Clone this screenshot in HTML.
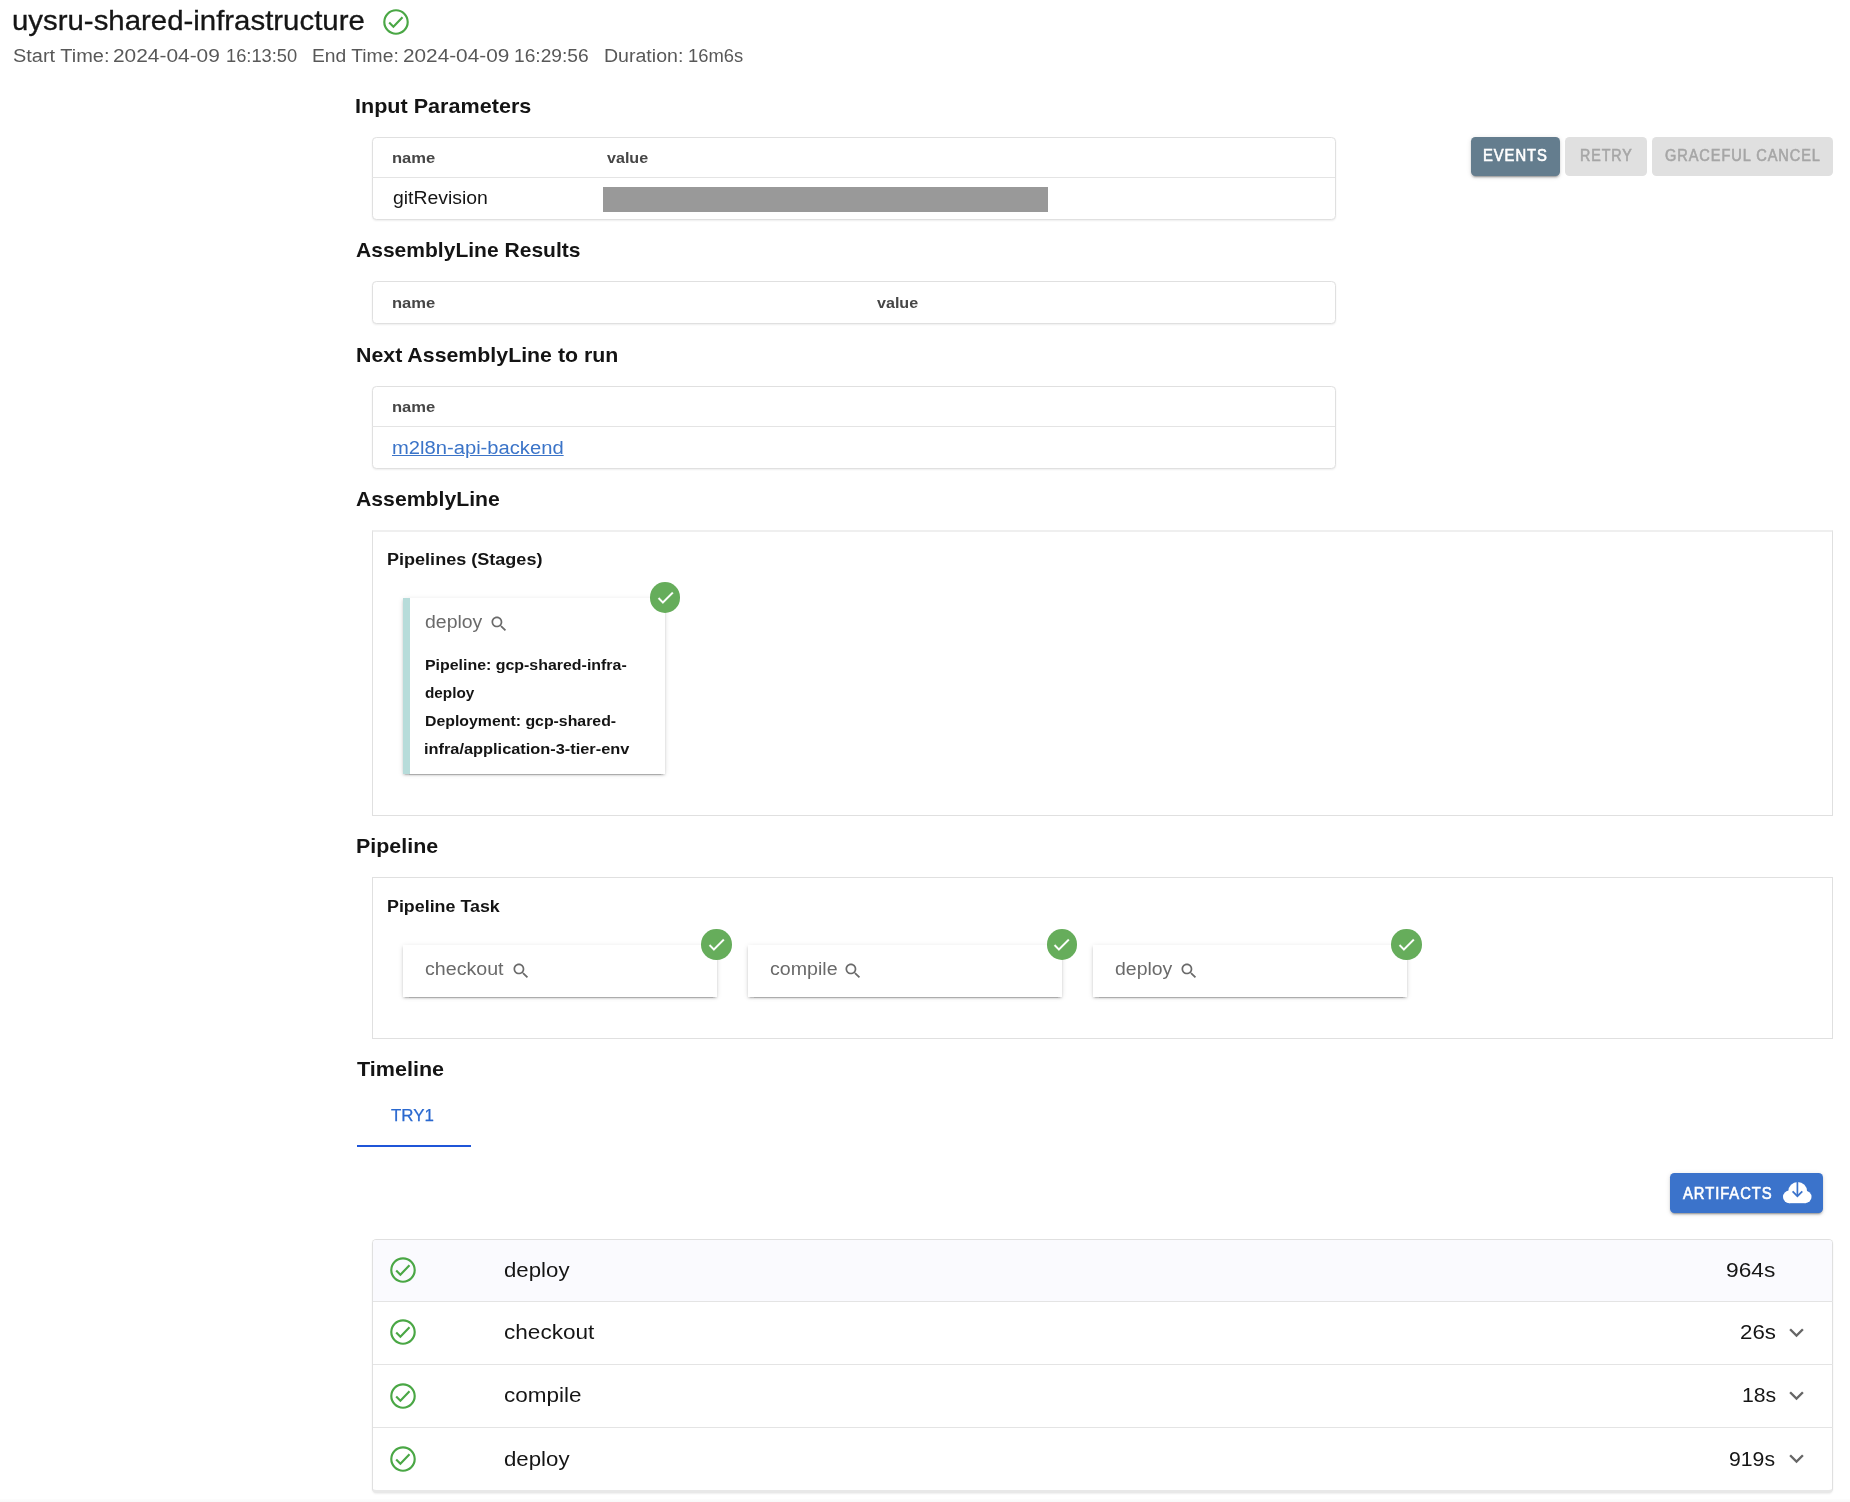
<!DOCTYPE html>
<html lang="en">
<head>
<meta charset="utf-8">
<title>uysru-shared-infrastructure</title>
<style>
html,body{margin:0;padding:0;background:#fff;}
body{will-change:transform;width:1850px;height:1502px;position:relative;overflow:hidden;font-family:"Liberation Sans",sans-serif;}
.t{position:absolute;white-space:nowrap;line-height:1;transform-origin:0 0;}
.abs{position:absolute;box-sizing:border-box;}
.paper{position:absolute;box-sizing:border-box;background:#fff;border-radius:4.4px;border:1px solid #e0e0e0;box-shadow:0 1px 2px rgba(0,0,0,.07);}
.hr{position:absolute;height:1px;background:#e4e4e4;}
.outl{position:absolute;box-sizing:border-box;border:1px solid #e0e0e0;}
.card{position:absolute;box-sizing:border-box;background:#fff;box-shadow:0 3.3px 1.1px -2.2px rgba(0,0,0,.2),0 2.2px 2.2px 0 rgba(0,0,0,.14),0 1.1px 5.5px 0 rgba(0,0,0,.12);}
.btn{position:absolute;box-sizing:border-box;border-radius:4.4px;}
.sh2{box-shadow:0 3px 1px -2px rgba(0,0,0,.2),0 2px 2px 0 rgba(0,0,0,.14),0 1px 5px 0 rgba(0,0,0,.12);}
.badge{position:absolute;width:30.4px;height:30.4px;border-radius:50%;background:#66ad5b;}
svg{position:absolute;display:block;overflow:visible;}
</style>
</head>
<body>
<!-- header icon -->
<svg style="left:380.60px;top:6.65px" width="30" height="30" viewBox="0 0 30 30"><circle cx="15" cy="15" r="11.7" fill="none" stroke="#4aa745" stroke-width="2.15"/><path d="M8.2 15.5 12.4 19.7 21.5 10.2" fill="none" stroke="#4aa745" stroke-width="2.15"/></svg>

<!-- tables -->
<div class="paper" style="left:372px;top:137px;width:963.5px;height:83px"></div>
<div class="hr" style="left:372.3px;top:177px;width:962.7px"></div>
<div class="abs" style="left:603px;top:187px;width:445px;height:25px;background:#999"></div>
<div class="paper" style="left:372px;top:281px;width:963.5px;height:43px"></div>
<div class="paper" style="left:372px;top:386px;width:963.5px;height:83px"></div>
<div class="hr" style="left:372.3px;top:426.2px;width:962.7px"></div>

<!-- buttons -->
<div class="btn sh2" style="left:1471px;top:136.9px;width:88.6px;height:38.9px;background:#647d8e"></div>
<div class="btn" style="left:1565px;top:136.9px;width:81.8px;height:38.9px;background:#e0e0e0"></div>
<div class="btn" style="left:1652.2px;top:136.9px;width:180.5px;height:38.9px;background:#e0e0e0"></div>

<!-- AssemblyLine box -->
<div class="outl" style="left:372px;top:530px;width:1461px;height:286px;border-top:2px solid #efefef"></div>
<div class="card" style="left:403px;top:598px;width:262.3px;height:176px;border-left:7px solid #b7dcda"></div>
<div class="badge" style="left:649.8px;top:582.3px"></div>
<svg style="left:655.14px;top:587.04px" width="21" height="21" viewBox="0 0 24 24"><path fill="#fff" stroke="#fff" stroke-width="0.3" d="M9 16.17 4.83 12l-1.42 1.41L9 19 21 7l-1.41-1.41z"/></svg>
<svg style="left:488.7px;top:614.4px" width="20" height="20" viewBox="0 0 24 24"><path fill="#6a6a6a" d="M15.5 14h-.79l-.28-.27C15.41 12.59 16 11.11 16 9.5 16 5.91 13.09 3 9.5 3S3 5.91 3 9.5 5.91 16 9.5 16c1.61 0 3.09-.59 4.23-1.57l.27.28v.79l5 4.99L20.49 19l-4.99-5zm-6 0C7.01 14 5 11.99 5 9.5S7.01 5 9.5 5 14 7.01 14 9.5 11.99 14 9.5 14z"/></svg>

<!-- Pipeline box -->
<div class="outl" style="left:372px;top:877.4px;width:1461px;height:161.4px"></div>
<div class="card" style="left:403.2px;top:945px;width:313.7px;height:52px"></div>
<div class="card" style="left:748.2px;top:945px;width:313.7px;height:52px"></div>
<div class="card" style="left:1093px;top:945px;width:313.7px;height:52px"></div>
<div class="badge" style="left:701.4px;top:929.2px"></div>
<div class="badge" style="left:1046.5px;top:929.2px"></div>
<div class="badge" style="left:1391.4px;top:929.2px"></div>
<svg style="left:706.14px;top:933.94px" width="21" height="21" viewBox="0 0 24 24"><path fill="#fff" stroke="#fff" stroke-width="0.3" d="M9 16.17 4.83 12l-1.42 1.41L9 19 21 7l-1.41-1.41z"/></svg>
<svg style="left:1051.24px;top:933.94px" width="21" height="21" viewBox="0 0 24 24"><path fill="#fff" stroke="#fff" stroke-width="0.3" d="M9 16.17 4.83 12l-1.42 1.41L9 19 21 7l-1.41-1.41z"/></svg>
<svg style="left:1396.14px;top:933.94px" width="21" height="21" viewBox="0 0 24 24"><path fill="#fff" stroke="#fff" stroke-width="0.3" d="M9 16.17 4.83 12l-1.42 1.41L9 19 21 7l-1.41-1.41z"/></svg>
<svg style="left:510.9px;top:961.3px" width="20" height="20" viewBox="0 0 24 24"><path fill="#6a6a6a" d="M15.5 14h-.79l-.28-.27C15.41 12.59 16 11.11 16 9.5 16 5.91 13.09 3 9.5 3S3 5.91 3 9.5 5.91 16 9.5 16c1.610 0 3.09-.59 4.23-1.57l.27.28v.79l5 4.99L20.49 19l-4.99-5zm-6 0C7.01 14 5 11.99 5 9.5S7.01 5 9.500 5 14 7.01 14 9.5 11.99 14 9.5 14z"/></svg>
<svg style="left:843px;top:961.3px" width="20" height="20" viewBox="0 0 24 24"><path fill="#6a6a6a" d="M15.5 14h-.79l-.28-.27C15.41 12.59 16 11.11 16 9.5 16 5.91 13.09 3 9.5 3S3 5.91 3 9.5 5.91 16 9.5 16c1.610 0 3.09-.59 4.23-1.57l.27.28v.79l5 4.99L20.49 19l-4.99-5zm-6 0C7.01 14 5 11.99 5 9.5S7.01 5 9.500 5 14 7.01 14 9.5 11.99 14 9.5 14z"/></svg>
<svg style="left:1178.6px;top:961.3px" width="20" height="20" viewBox="0 0 24 24"><path fill="#6a6a6a" d="M15.5 14h-.79l-.28-.27C15.41 12.59 16 11.11 16 9.5 16 5.91 13.09 3 9.5 3S3 5.91 3 9.5 5.91 16 9.5 16c1.610 0 3.09-.59 4.23-1.57l.27.28v.79l5 4.99L20.49 19l-4.99-5zm-6 0C7.01 14 5 11.99 5 9.5S7.01 5 9.500 5 14 7.01 14 9.5 11.99 14 9.5 14z"/></svg>

<!-- tab underline -->
<div class="abs" style="left:356.7px;top:1144.5px;width:114.4px;height:2.2px;background:#1f55d8"></div>

<!-- artifacts button -->
<div class="btn sh2" style="left:1670px;top:1173.1px;width:153.3px;height:40.1px;background:#3b73cb"></div>
<svg style="left:1783.2px;top:1182px" width="28.5" height="21.2" viewBox="0 0 28.5 21.2"><g fill="#fff"><circle cx="14.7" cy="9.45" r="9.45"/><circle cx="6.3" cy="14.9" r="6.3"/><circle cx="22.3" cy="15" r="6.2"/><rect x="6.3" y="10" width="16" height="11.2"/></g><g fill="none" stroke="#3b73cb" stroke-width="1.7"><path d="M14.4 0v13.8"/><path d="M9.6 9.3l4.8 4.9 4.9-4.9"/></g></svg>

<!-- list -->
<div class="paper" style="left:372px;top:1239px;width:1461px;height:253.5px;overflow:hidden;border-bottom:3px solid #e8e8e8">
  <div class="abs" style="left:0;top:0;width:1461px;height:62px;background:#fafafe"></div>
</div>
<div class="hr" style="left:372.5px;top:1301px;width:1460px"></div>
<div class="hr" style="left:372.5px;top:1364px;width:1460px"></div>
<div class="hr" style="left:372.5px;top:1427px;width:1460px"></div>
<svg style="left:388.35px;top:1255.10px" width="30" height="30" viewBox="0 0 30 30"><circle cx="15" cy="15" r="11.7" fill="none" stroke="#4aa745" stroke-width="2.15"/><path d="M8.2 15.5 12.4 19.7 21.5 10.2" fill="none" stroke="#4aa745" stroke-width="2.15"/></svg>
<svg style="left:388.35px;top:1317.40px" width="30" height="30" viewBox="0 0 30 30"><circle cx="15" cy="15" r="11.7" fill="none" stroke="#4aa745" stroke-width="2.15"/><path d="M8.2 15.5 12.4 19.7 21.5 10.2" fill="none" stroke="#4aa745" stroke-width="2.15"/></svg>
<svg style="left:388.35px;top:1380.70px" width="30" height="30" viewBox="0 0 30 30"><circle cx="15" cy="15" r="11.7" fill="none" stroke="#4aa745" stroke-width="2.15"/><path d="M8.2 15.5 12.4 19.7 21.5 10.2" fill="none" stroke="#4aa745" stroke-width="2.15"/></svg>
<svg style="left:388.35px;top:1444.00px" width="30" height="30" viewBox="0 0 30 30"><circle cx="15" cy="15" r="11.7" fill="none" stroke="#4aa745" stroke-width="2.15"/><path d="M8.2 15.5 12.4 19.7 21.5 10.2" fill="none" stroke="#4aa745" stroke-width="2.15"/></svg>
<svg style="left:1782.2px;top:1318.1px" width="29" height="29" viewBox="0 0 24 24"><path fill="#666" d="M16.59 8.59 12 13.17 7.41 8.59 6 10l6 6 6-6z"/></svg>
<svg style="left:1782.2px;top:1381.1px" width="29" height="29" viewBox="0 0 24 24"><path fill="#666" d="M16.59 8.59 12 13.17 7.41 8.59 6 10l6 6 6-6z"/></svg>
<svg style="left:1782.2px;top:1444.1px" width="29" height="29" viewBox="0 0 24 24"><path fill="#666" d="M16.59 8.59 12 13.17 7.41 8.59 6 10l6 6 6-6z"/></svg>

<div class="abs" style="left:0;top:1498.5px;width:1850px;height:4px;background:linear-gradient(#fdfdfd,#f7f7f7)"></div>
<span id="title" class="t" style="left:12.37px;top:6.98px;font-size:27.2px;font-weight:400;color:#151515;transform:scaleX(1.0809);-webkit-text-stroke:0.3px;">uysru-shared-infrastructure</span>
<span id="s1" class="t" style="left:12.80px;top:46.56px;font-size:18px;font-weight:400;color:#585858;transform:scaleX(1.1088);">Start Time:</span>
<span id="s2" class="t" style="left:113.30px;top:46.56px;font-size:18px;font-weight:400;color:#585858;transform:scaleX(1.1604);">2024-04-09</span>
<span id="s3" class="t" style="left:225.83px;top:46.56px;font-size:18px;font-weight:400;color:#585858;transform:scaleX(1.0162);">16:13:50</span>
<span id="s4" class="t" style="left:312.44px;top:46.56px;font-size:18px;font-weight:400;color:#585858;transform:scaleX(1.0703);">End Time:</span>
<span id="s5" class="t" style="left:403.00px;top:46.56px;font-size:18px;font-weight:400;color:#585858;transform:scaleX(1.1539);">2024-04-09</span>
<span id="s6" class="t" style="left:514.41px;top:46.56px;font-size:18px;font-weight:400;color:#585858;transform:scaleX(1.0662);">16:29:56</span>
<span id="s7" class="t" style="left:604.28px;top:46.56px;font-size:18px;font-weight:400;color:#585858;transform:scaleX(1.0861);">Duration:</span>
<span id="s8" class="t" style="left:688.41px;top:46.56px;font-size:18px;font-weight:400;color:#585858;transform:scaleX(1.0210);">16m6s</span>
<span id="h1" class="t" style="left:355.47px;top:96.16px;font-size:20.6px;font-weight:700;color:#141414;transform:scaleX(1.0479);">Input Parameters</span>
<span id="h2" class="t" style="left:356.29px;top:239.86px;font-size:20.6px;font-weight:700;color:#141414;transform:scaleX(1.0217);">AssemblyLine Results</span>
<span id="h3" class="t" style="left:355.70px;top:345.36px;font-size:20.6px;font-weight:700;color:#141414;transform:scaleX(1.0357);">Next AssemblyLine to run</span>
<span id="h4" class="t" style="left:356.20px;top:488.86px;font-size:20.6px;font-weight:700;color:#141414;transform:scaleX(1.0301);">AssemblyLine</span>
<span id="h5" class="t" style="left:355.60px;top:835.66px;font-size:20.6px;font-weight:700;color:#141414;transform:scaleX(1.0401);">Pipeline</span>
<span id="h6" class="t" style="left:356.78px;top:1059.16px;font-size:20.6px;font-weight:700;color:#141414;transform:scaleX(1.0466);">Timeline</span>
<span id="n1" class="t" style="left:392.41px;top:149.52px;font-size:15.1px;font-weight:700;color:#464646;transform:scaleX(1.0981);">name</span>
<span id="v1" class="t" style="left:606.73px;top:149.52px;font-size:15.1px;font-weight:700;color:#464646;transform:scaleX(1.0661);">value</span>
<span id="git" class="t" style="left:392.50px;top:189.36px;font-size:18px;font-weight:400;color:#151515;transform:scaleX(1.0781);">gitRevision</span>
<span id="n2" class="t" style="left:392.41px;top:295.12px;font-size:15.1px;font-weight:700;color:#464646;transform:scaleX(1.0981);">name</span>
<span id="v2" class="t" style="left:877.13px;top:295.12px;font-size:15.1px;font-weight:700;color:#464646;transform:scaleX(1.0661);">value</span>
<span id="n3" class="t" style="left:392.41px;top:398.72px;font-size:15.1px;font-weight:700;color:#464646;transform:scaleX(1.0981);">name</span>
<span id="lnk" class="t" style="left:391.67px;top:439.06px;font-size:18px;font-weight:400;color:#3b74c8;transform:scaleX(1.1211);text-decoration:underline;text-underline-offset:1px;">m2l8n-api-backend</span>
<span id="ps" class="t" style="left:386.66px;top:551.27px;font-size:17.4px;font-weight:700;color:#141414;transform:scaleX(1.0377);">Pipelines (Stages)</span>
<span id="c0" class="t" style="left:424.50px;top:613.46px;font-size:18px;font-weight:400;color:#6a6a6a;transform:scaleX(1.0804);">deploy</span>
<span id="l1" class="t" style="left:424.50px;top:658.27px;font-size:14.8px;font-weight:700;color:#141414;transform:scaleX(1.0759);">Pipeline: gcp-shared-infra-</span>
<span id="l2" class="t" style="left:424.52px;top:686.37px;font-size:14.8px;font-weight:700;color:#141414;transform:scaleX(1.0349);">deploy</span>
<span id="l3" class="t" style="left:424.50px;top:714.47px;font-size:14.8px;font-weight:700;color:#141414;transform:scaleX(1.0711);">Deployment: gcp-shared-</span>
<span id="l4" class="t" style="left:424.23px;top:741.67px;font-size:14.8px;font-weight:700;color:#141414;transform:scaleX(1.1052);">infra/application-3-tier-env</span>
<span id="pt" class="t" style="left:386.93px;top:898.27px;font-size:17.4px;font-weight:700;color:#141414;transform:scaleX(1.0263);">Pipeline Task</span>
<span id="c1" class="t" style="left:424.70px;top:960.46px;font-size:18px;font-weight:400;color:#6a6a6a;transform:scaleX(1.0902);">checkout</span>
<span id="c2" class="t" style="left:769.60px;top:960.46px;font-size:18px;font-weight:400;color:#6a6a6a;transform:scaleX(1.0890);">compile</span>
<span id="c3" class="t" style="left:1114.60px;top:960.46px;font-size:18px;font-weight:400;color:#6a6a6a;transform:scaleX(1.0804);">deploy</span>
<span id="try" class="t" style="left:391.33px;top:1108.06px;font-size:16px;font-weight:400;color:#2a68cf;transform:scaleX(1.0556);-webkit-text-stroke:0.25px;">TRY1</span>
<span id="r1" class="t" style="left:503.60px;top:1260.16px;font-size:20.6px;font-weight:400;color:#151515;transform:scaleX(1.0795);">deploy</span>
<span id="r2" class="t" style="left:503.60px;top:1322.36px;font-size:20.6px;font-weight:400;color:#151515;transform:scaleX(1.0956);">checkout</span>
<span id="r3" class="t" style="left:503.60px;top:1385.46px;font-size:20.6px;font-weight:400;color:#151515;transform:scaleX(1.0916);">compile</span>
<span id="r4" class="t" style="left:503.60px;top:1448.76px;font-size:20.6px;font-weight:400;color:#151515;transform:scaleX(1.0796);">deploy</span>
<span id="d1" class="t" style="left:1726.29px;top:1260.16px;font-size:20.6px;font-weight:400;color:#151515;transform:scaleX(1.1028);">964s</span>
<span id="d2" class="t" style="left:1739.60px;top:1322.36px;font-size:20.6px;font-weight:400;color:#151515;transform:scaleX(1.0816);">26s</span>
<span id="d3" class="t" style="left:1741.65px;top:1385.46px;font-size:20.6px;font-weight:400;color:#151515;transform:scaleX(1.0304);">18s</span>
<span id="d4" class="t" style="left:1729.20px;top:1448.76px;font-size:20.6px;font-weight:400;color:#151515;transform:scaleX(1.0297);">919s</span>
<span id="b1" class="t" style="left:1482.50px;top:148.29px;font-size:15.6px;font-weight:400;color:#fff;transform:scaleX(0.9479);-webkit-text-stroke:0.6px;letter-spacing:1px;">EVENTS</span>
<span id="b2" class="t" style="left:1579.60px;top:148.29px;font-size:15.6px;font-weight:400;color:#a6a6a6;transform:scaleX(0.9152);-webkit-text-stroke:0.6px;letter-spacing:1px;">RETRY</span>
<span id="b3" class="t" style="left:1664.59px;top:148.29px;font-size:15.6px;font-weight:400;color:#a6a6a6;transform:scaleX(0.9337);-webkit-text-stroke:0.6px;letter-spacing:1px;">GRACEFUL CANCEL</span>
<span id="art" class="t" style="left:1682.60px;top:1185.89px;font-size:15.6px;font-weight:400;color:#fff;transform:scaleX(0.9482);-webkit-text-stroke:0.6px;letter-spacing:1px;">ARTIFACTS</span>
</body>
</html>
